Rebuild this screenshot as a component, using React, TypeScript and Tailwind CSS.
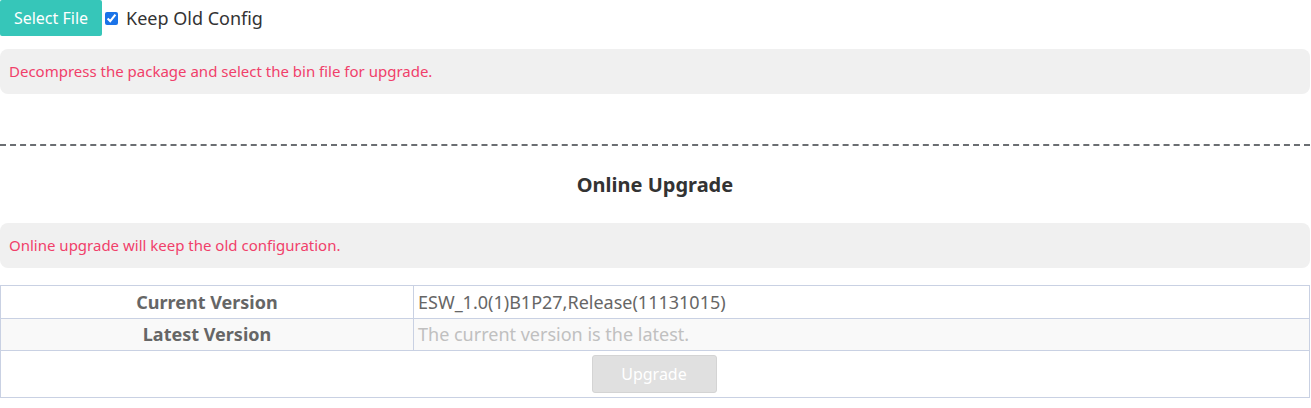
export default function App() {
  return (
    <div className="w-[1310px] bg-white font-['Noto_Sans',sans-serif] text-[#333]">
      {/* Local upgrade */}
      <div className="flex items-center h-[36px]">
        <button className="h-[36px] w-[102px] bg-[#36c6b9] text-white text-[16px] rounded-[2px]">
          Select File
        </button>
        <label className="flex items-center ml-[3px] text-[18px] text-[#333]">
          <input type="checkbox" defaultChecked className="w-[13px] h-[13px] mr-[8px] accent-[#1a73e8]" />
          Keep Old Config
        </label>
      </div>

      <div className="mt-[13px] h-[45px] flex items-center px-[9px] bg-[#f0f0f0] rounded-[8px] text-[15px] text-[#f0406a]">
        Decompress the package and select the bin file for upgrade.
      </div>

      <div className="mt-[50px] border-t-2 border-dashed border-[#6b6e72]" />

      {/* Online upgrade */}
      <h2 className="mt-[25px] text-center text-[20px] font-bold text-[#333] leading-[28px]">Online Upgrade</h2>

      <div className="mt-[24px] h-[45px] flex items-center px-[9px] bg-[#f0f0f0] rounded-[8px] text-[15px] text-[#f0406a]">
        Online upgrade will keep the old configuration.
      </div>

      <table className="mt-[17px] w-full border-collapse border border-[#c9d1e3] text-[18px]">
        <tbody>
          <tr className="h-[33px]">
            <td className="w-[413px] border border-[#c9d1e3] text-center font-bold text-[#666]">Current Version</td>
            <td className="border border-[#c9d1e3] px-[4px] text-[#666]">ESW_1.0(1)B1P27,Release(11131015)</td>
          </tr>
          <tr className="h-[32px] bg-[#f9f9f9]">
            <td className="border border-[#c9d1e3] text-center font-bold text-[#666]">Latest Version</td>
            <td className="border border-[#c9d1e3] px-[4px] text-[#c0c0c0]">The current version is the latest.</td>
          </tr>
          <tr className="h-[47px]">
            <td colSpan={2} className="border border-[#c9d1e3] text-center">
              <button disabled className="h-[38px] w-[125px] -ml-[2px] bg-[#e0e0e0] border border-[#d4d4d4] rounded-[3px] text-white text-[16px]">
                Upgrade
              </button>
            </td>
          </tr>
        </tbody>
      </table>
    </div>
  );
}
